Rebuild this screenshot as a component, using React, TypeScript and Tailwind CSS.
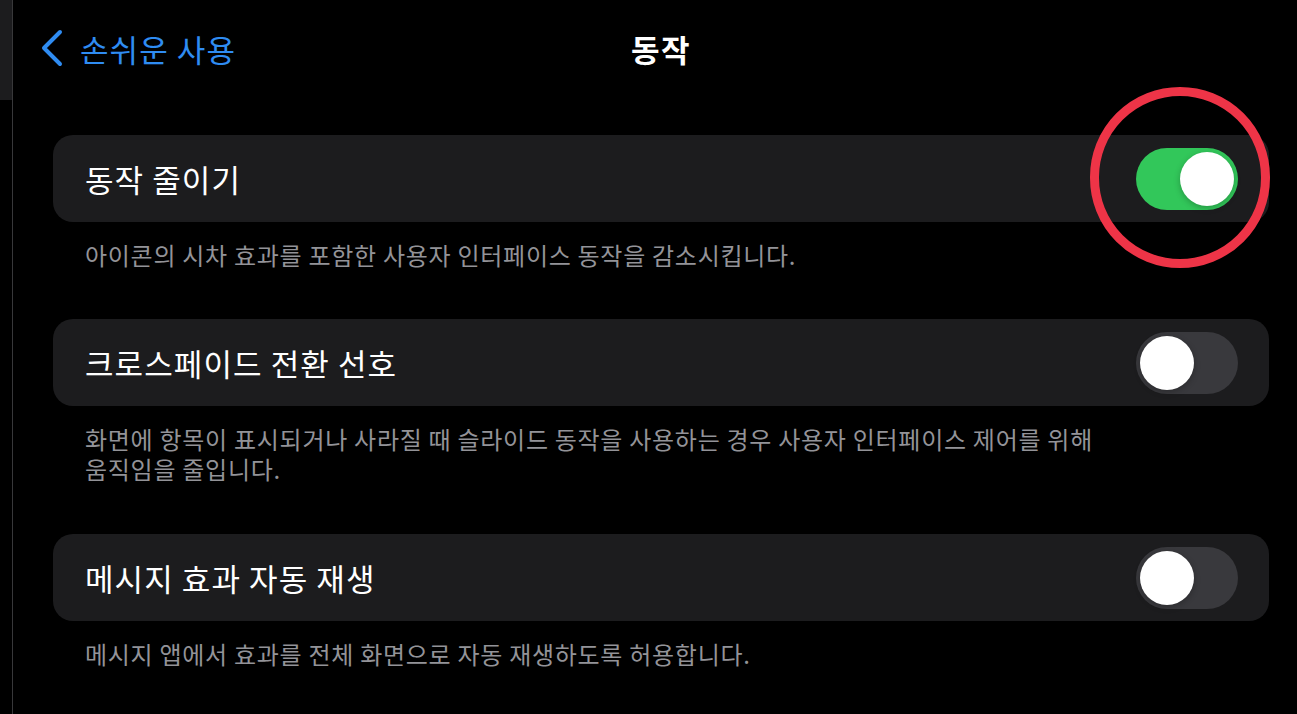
import { Fragment } from "react";

const SECTIONS = [
  {
    label: "동작 줄이기",
    on: true,
    desc: ["아이콘의 시차 효과를 포함한 사용자 인터페이스 동작을 감소시킵니다."],
  },
  {
    label: "크로스페이드 전환 선호",
    on: false,
    desc: [
      "화면에 항목이 표시되거나 사라질 때 슬라이드 동작을 사용하는 경우 사용자 인터페이스 제어를 위해",
      "움직임을 줄입니다.",
    ],
  },
  {
    label: "메시지 효과 자동 재생",
    on: false,
    desc: ["메시지 앱에서 효과를 전체 화면으로 자동 재생하도록 허용합니다."],
  },
];

function Toggle({ on }: { on: boolean }) {
  return (
    <div
      className={`w-[102px] h-[62px] rounded-full p-[4px] flex items-center ${
        on ? "bg-[#32c75a] justify-end" : "bg-[#39393d] justify-start"
      }`}
    >
      <div className="w-[54px] h-[54px] rounded-full bg-white shadow-[0_2px_6px_rgba(0,0,0,0.25)]" />
    </div>
  );
}

export default function App() {
  return (
    <div
      className="relative w-full h-[714px] bg-black overflow-hidden flex"
      style={{ fontFamily: '"Noto Sans CJK KR", "Noto Sans", sans-serif' }}
    >
      {/* sidebar edge */}
      <div className="w-[13px] shrink-0 border-r border-[#38383a]">
        <div className="h-[100px] bg-[#1c1c1e]" />
      </div>

      <div className="flex-1 min-w-0">
        {/* Nav bar */}
        <div className="h-[96px] grid grid-cols-[1fr_auto_1fr] items-center pl-[27px] pr-[15px]">
          <div className="flex items-center gap-[16px] text-[#2f8cf2]">
            <svg width="24" height="38" viewBox="0 0 24 38" fill="none" stroke="currentColor" strokeWidth="4" strokeLinecap="round" strokeLinejoin="round">
              <polyline points="20,3 4,19 20,35" />
            </svg>
            <span className="text-[31px] leading-none tracking-[0.035em]">손쉬운 사용</span>
          </div>
          <div className="text-white text-[31px] font-semibold leading-none tracking-[0.05em]">동작</div>
          <div />
        </div>

        {/* List */}
        <div className="pl-[40px] pr-[28px] pt-[39px]">
          {SECTIONS.map((s, i) => (
            <div key={s.label} className={i === 0 ? "mb-[49px]" : "mb-[50px]"}>
              <div className="h-[87px] rounded-[20px] bg-[#1c1c1e] flex items-center justify-between pl-[32px] pr-[31px]">
                <span className="text-white text-[31px] leading-none tracking-[0.035em]">{s.label}</span>
                <Toggle on={s.on} />
              </div>
              <p className="pt-[18px] pl-[32px] text-[#939398] text-[24px] leading-[30px] tracking-[0.03em]">
                {s.desc.map((line, j) => (
                  <Fragment key={line}>
                    {j > 0 && <br />}
                    {line}
                  </Fragment>
                ))}
              </p>
            </div>
          ))}
        </div>
      </div>

      {/* annotation circle */}
      <div className="absolute left-[1090px] top-[87px] w-[180px] h-[181px] rounded-full border-[9px] border-[#ee3447]" />
    </div>
  );
}
